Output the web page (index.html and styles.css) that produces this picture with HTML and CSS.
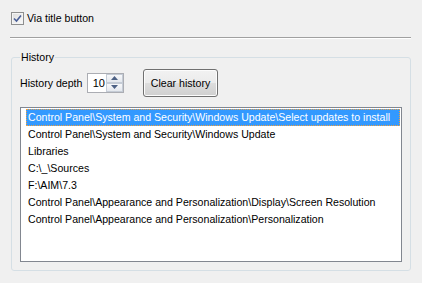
FILE: index.html
```html
<!DOCTYPE html>
<html>
<head>
<meta charset="utf-8">
<link rel="stylesheet" href="styles.css">
</head>
<body>
<div class="opt">
  <span class="check"><svg width="9" height="9" viewBox="0 0 9 9"><path d="M1 4.5 L3.5 7 L8 1.5" fill="none" stroke="#4a5f97" stroke-width="1.6"/></svg></span>
  <span class="opt-label">Via title button</span>
</div>
<div class="sep"></div>
<fieldset class="group">
  <legend>History</legend>
  <div class="controls">
    <span class="depth-label">History depth</span>
    <div class="spin">
      <span class="spin-value">10</span>
      <div class="spin-btns">
        <span class="spin-btn"><svg width="7" height="4" viewBox="0 0 7 4"><path d="M0 4 L3.5 0 L7 4Z" fill="#4d6185"/></svg></span>
        <span class="spin-btn"><svg width="7" height="4" viewBox="0 0 7 4"><path d="M0 0 L3.5 4 L7 0Z" fill="#4d6185"/></svg></span>
      </div>
    </div>
    <button class="btn">Clear history</button>
  </div>
  <div class="list">
    <div class="item sel">Control Panel\System and Security\Windows Update\Select updates to install</div>
    <div class="item">Control Panel\System and Security\Windows Update</div>
    <div class="item">Libraries</div>
    <div class="item">C:\_\Sources</div>
    <div class="item">F:\AIM\7.3</div>
    <div class="item">Control Panel\Appearance and Personalization\Display\Screen Resolution</div>
    <div class="item">Control Panel\Appearance and Personalization\Personalization</div>
  </div>
</fieldset>
</body>
</html>
```
FILE: styles.css
```css
html, body {
  margin: 0;
  padding: 0;
  background: #f0f0f0;
  font-family: "Liberation Sans", Arial, sans-serif;
  font-size: 10.6px;
  color: #000;
}
.opt {
  display: flex;
  align-items: center;
  gap: 3px;
  padding: 12px 0 0 11px;
  height: 13px;
  line-height: 13px;
}
.check {
  box-sizing: border-box;
  width: 13px;
  height: 13px;
  border: 1px solid #8e8f8f;
  background: linear-gradient(135deg, #dcdcdc, #fbfbfb);
  box-shadow: inset 0 0 0 1px #f4f4f4;
  display: flex;
  align-items: center;
  justify-content: center;
}
.sep {
  margin: 12px 11px 0 10px;
  border-top: 1px solid #a0a0a0;
  border-bottom: 1px solid #ffffff;
}
.group {
  margin: 12px 11px 0 11px;
  padding: 0 8px 8px 8px;
  border: 1px solid #d5dfe5;
  border-radius: 3px;
  min-inline-size: 0;
}
.group legend {
  padding: 0 1px;
  margin: 0;
  line-height: 13px;
  height: 13px;
}
.controls {
  display: flex;
  align-items: center;
  margin-top: 5px;
  height: 28px;
}
.depth-label {
  width: 67px;
}
.spin {
  box-sizing: border-box;
  width: 37px;
  height: 20px;
  border: 1px solid #abadb3;
  background: #fff;
  display: flex;
  align-items: stretch;
  margin-top: -1px;
}
.spin-value {
  flex: 1;
  text-align: right;
  line-height: 18px;
  padding-right: 1px;
  font-size: 11px;
}
.spin-btns {
  display: flex;
  flex-direction: column;
  width: 17px;
  padding: 0;
}
.spin-btn {
  flex: 1;
  box-sizing: border-box;
  border: 1px solid #c5ccd6;
  background: linear-gradient(#f7f8fa, #e4e8ee);
  display: flex;
  align-items: center;
  justify-content: center;
}
.btn {
  box-sizing: border-box;
  margin-left: 19px;
  width: 75px;
  height: 28px;
  border: 1px solid #707070;
  border-radius: 3px;
  background: linear-gradient(#f2f2f2 0%, #ebebeb 50%, #dddddd 51%, #cfcfcf 100%);
  box-shadow: inset 0 0 0 1px #fcfcfc;
  font-family: "Liberation Sans", Arial, sans-serif;
  font-size: 10.6px;
  color: #000;
  padding: 0;
}
.list {
  box-sizing: border-box;
  margin-top: 10px;
  height: 155px;
  border: 1px solid #828790;
  background: #fff;
  padding: 1px 1px 0 5px;
}
.item {
  height: 17px;
  line-height: 17px;
  padding-left: 2px;
  white-space: nowrap;
}
.item.sel {
  background: #3399ff;
  color: #fff;
  outline: 1px dotted #f0a040;
  outline-offset: -1px;
}
```
